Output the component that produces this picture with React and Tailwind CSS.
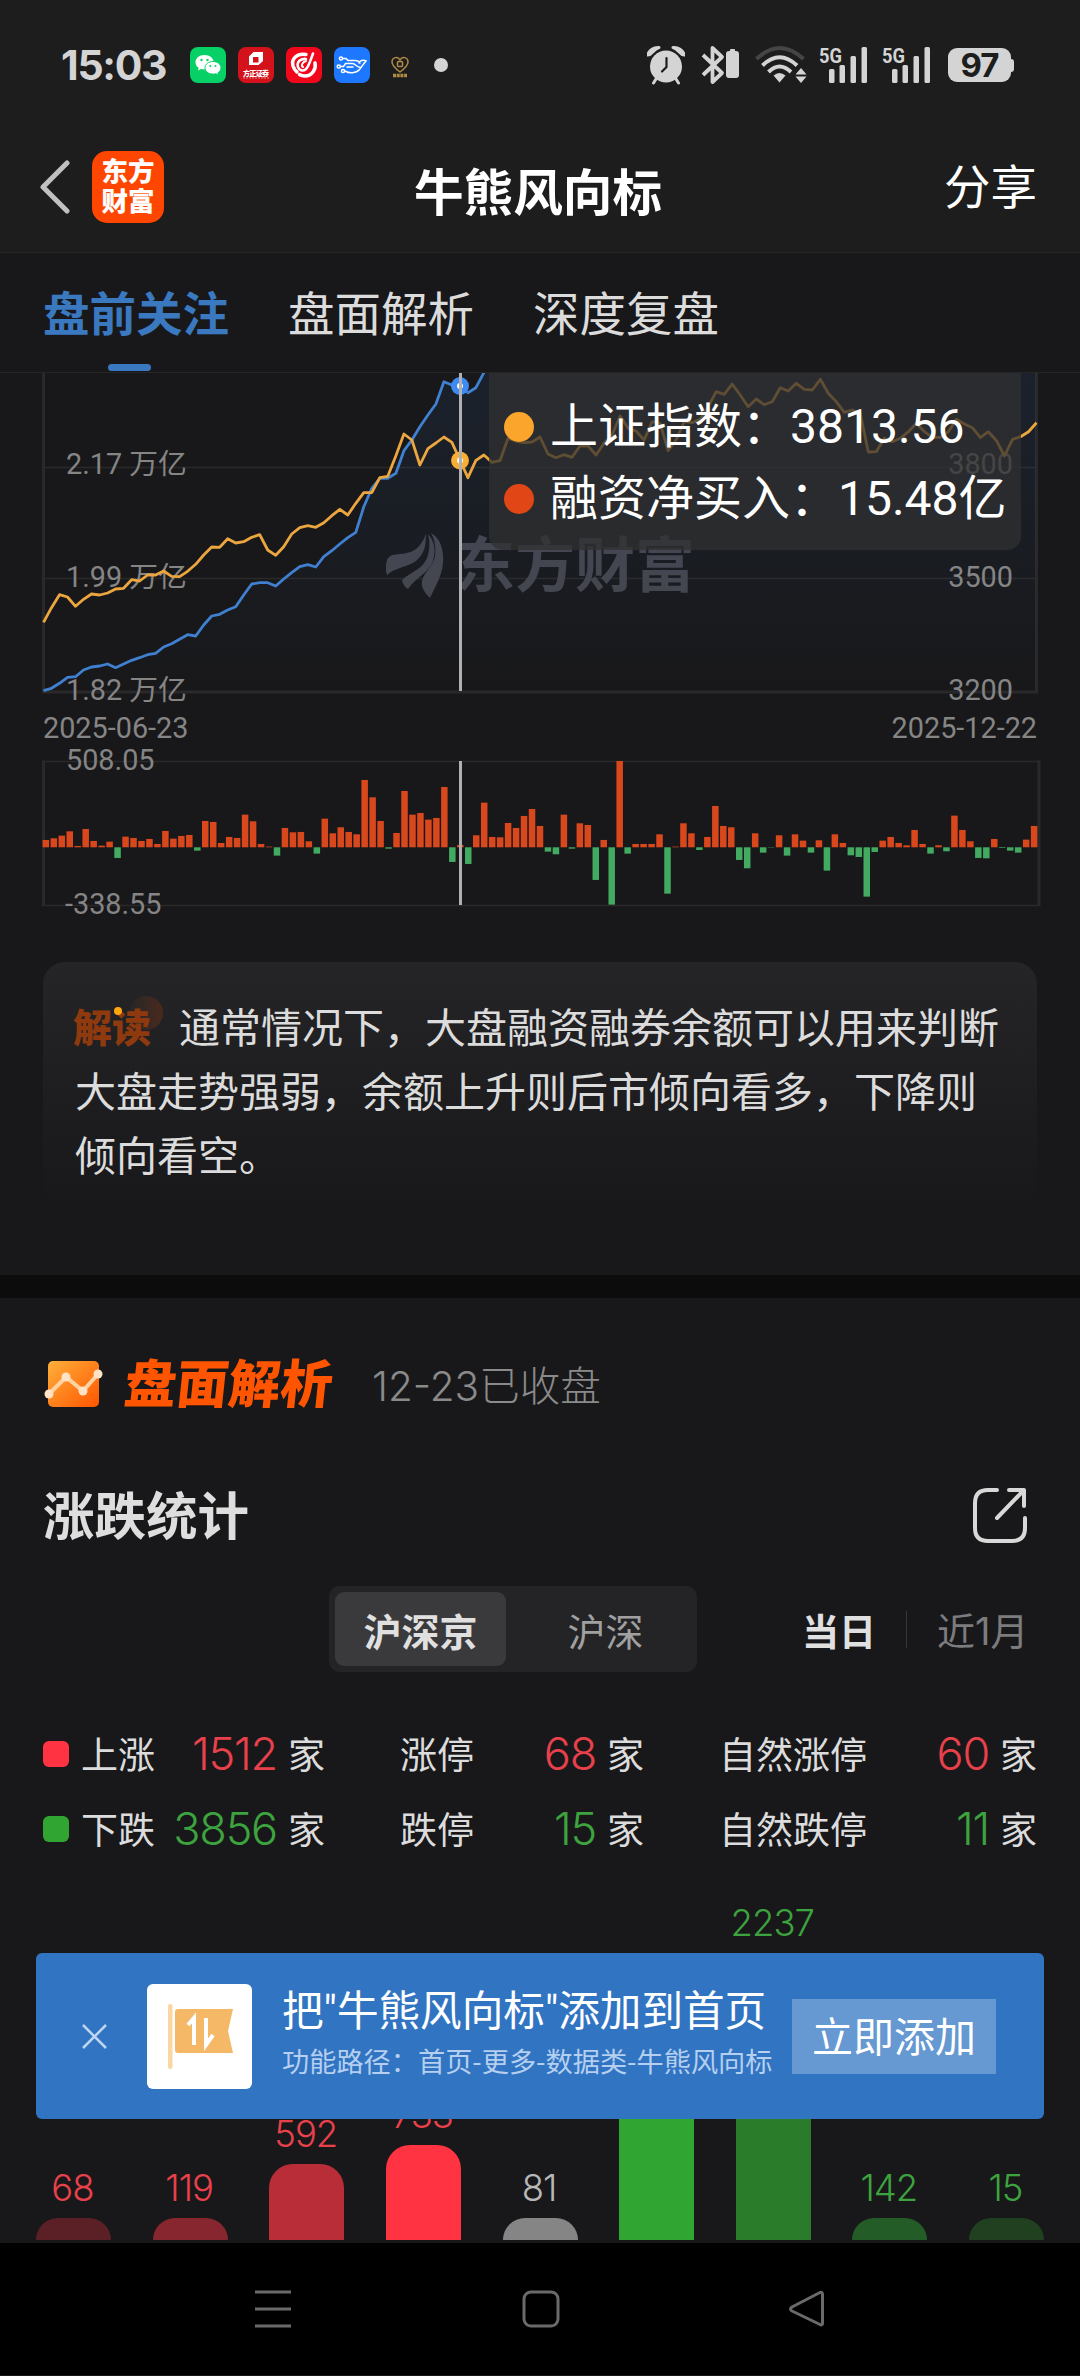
import React, { useState } from "react";

const indexLine = [
  787, 743, 704, 711, 739, 718, 702, 705, 699, 687, 685, 659, 663, 645, 645, 633, 649, 650, 634, 613,
  585, 561, 562, 536, 549, 545, 532, 524, 570, 586, 560, 522, 503, 497, 502, 488, 467, 448, 465, 430,
  398, 398, 353, 349, 287, 222, 240, 315, 266, 249, 231, 247, 300, 353, 301, 285, 307, 302, 235, 244,
  248, 246, 231, 282, 293, 284, 292, 258, 258, 285, 250, 225, 168, 205, 213, 240, 185, 190, 272, 240,
  185, 188, 178, 140, 95, 103, 72, 105, 140, 117, 134, 125, 83, 93, 70, 88, 90, 58, 100, 125,
  157, 150, 160, 276, 275, 235, 245, 235, 215, 190, 215, 232, 232, 215, 178, 192, 203, 233, 215, 242,
  288, 238, 230, 215, 188,
];

const balanceLine = [
  992, 985, 970, 952, 950, 930, 921, 918, 912, 923, 912, 901, 893, 884, 880, 861, 851, 838, 824, 828,
  795, 768, 763, 750, 740, 705, 672, 668, 668, 678, 657, 638, 620, 614, 621, 590, 572, 552, 533, 517,
  440, 385, 355, 355, 340, 272, 240, 200, 165, 132, 65, 75, 78, 98, 83, 38, -30,
];

const netBuy = [
  22, 27, 35, 48, 4, 55, 19, 5, 17, -32, 32, 28, 19, 25, 10, 49, 26, 34, 37, -10,
  79, 76, 13, 31, 28, 98, 78, 10, 2, -25, 58, 45, 46, 18, -19, 86, 42, 60, 46, 39,
  202, 150, 79, -4, 43, 169, 98, 103, 83, 88, 181, -44, 7, -50, 36, 134, 31, 30, 73, 58,
  94, 115, 64, -13, -21, 98, -4, 72, 67, -98, 22, -172, 259, -19, 10, 10, 10, 39, -139, 2,
  72, 42, -8, 31, 124, 64, 60, -38, -63, 42, -16, -1, 36, -25, 39, 20, -16, 21, -70, 39,
  13, -24, -29, -148, -14, 20, 31, 13, 6, 52, 10, -19, 6, -12, 95, 52, 18, -32, -33, 25,
  -2, -10, -16, 23, 64,
];

const toPoints = (values) =>
  values.map((v, i) => `${(43.5 + i * 8.008).toFixed(1)},${(v / 3 - 13).toFixed(1)}`).join(" ");

const stats = [
  { dot: "bg-[#ff3341]", color: "text-[#e8414b]", items: [["上涨", 1512], ["涨停", 68], ["自然涨停", 60]] },
  { dot: "bg-[#30a532]", color: "text-[#3da33f]", items: [["下跌", 3856], ["跌停", 15], ["自然跌停", 11]] },
];

const distribution = [
  { count: 68, height: 22, bar: "bg-[#5a2026]", text: "text-[#e8414b]" },
  { count: 119, height: 22, bar: "bg-[#88262f]", text: "text-[#e8414b]" },
  { count: 592, height: 76, bar: "bg-[#b82d38]", text: "text-[#e8414b]" },
  { count: 733, height: 95, bar: "bg-[#ff3341]", text: "text-[#e8414b]" },
  { count: 81, height: 22, bar: "bg-[#858585]", text: "text-[#b8b8b8]" },
  { count: 1462, height: 188, bar: "bg-[#30a532]", text: "text-[#3da33f]" },
  { count: 2237, height: 287, bar: "bg-[#2a7c2b]", text: "text-[#3da33f]" },
  { count: 142, height: 22, bar: "bg-[#235c26]", text: "text-[#3da33f]" },
  { count: 15, height: 22, bar: "bg-[#20401f]", text: "text-[#3da33f]" },
];

function SignalIcon() {
  return (
    <svg width="50" height="40" viewBox="0 0 50 40" fill="#d4d4d4">
      <text x="0" y="17.5" fontSize="21" fontWeight="700" fontFamily="Roboto, sans-serif" textLength="23" lengthAdjust="spacingAndGlyphs">5G</text>
      <rect x="10" y="24" width="5.5" height="14" rx="1.5" />
      <rect x="20.500" y="20" width="5.5" height="18" rx="1.5" />
      <rect x="31.500" y="11" width="5.5" height="27" rx="1.5" />
      <rect x="42.500" y="2" width="5.500" height="36" rx="1.5" />
    </svg>
  );
}

function StatusBar() {
  return (
    <div className="flex h-[130px] shrink-0 items-center pl-[61px] pr-[66px] text-[#d4d4d4]">
      <span className="w-[129px] whitespace-nowrap font-['Inter',sans-serif] text-[41px] font-bold leading-none tracking-[-1.3px]">15:03</span>
      <div className="flex items-center gap-3">
        <svg width="36" height="36" viewBox="0 0 36 36">
          <rect width="36" height="36" rx="8" fill="#07d166" />
          <path d="M14.500 8c-5.200 0-9 3.200-9 7.300 0 2.300 1.200 4.300 3.200 5.600l-.8 2.700 3.200-1.600c1 .3 2.200.4 3.400.4 5.200 0 9.200-3 9.200-7.100S19.700 8 14.500 8z" fill="#fff" />
          <path d="M23 14.500c-4.600 0-8 2.900-8 6.300s3.400 6.300 8 6.300c1 0 2-.2 2.900-.4l2.600 1.400-.6-2.300c1.900-1.200 3.100-2.900 3.100-5 0-3.400-3.400-6.300-8-6.300z" fill="#fff" stroke="#07d166" />
          <g fill="#07d166">
            <circle cx="11.500" cy="13" r="1.200" />
            <circle cx="17.500" cy="13" r="1.200" />
            <circle cx="20.300" cy="19" r="1" />
            <circle cx="25.500" cy="19" r="1" />
          </g>
        </svg>
        <svg width="36" height="36" viewBox="0 0 36 36">
          <rect width="36" height="36" rx="8" fill="#d3121c" />
          <path fillRule="evenodd" d="M15.500 5H25v9l-4.500 4H11V9.500zM15 10v5.500h5.500V10z" fill="#fff" />
          <text x="5" y="28.500" fontSize="7" fontWeight="900" fill="#fff" textLength="26" fontFamily="'Noto Sans CJK SC', sans-serif">方正证券</text>
          <path d="M5 31h26" stroke="#f0a0a0" strokeWidth="0.800" strokeDasharray="2 1" />
        </svg>
        <svg width="36" height="36" viewBox="0 0 36 36" fill="none" stroke="#fff" strokeLinecap="round">
          <rect width="36" height="36" rx="8" fill="#f0071b" stroke="none" />
          <path d="M20 7.500C11 6 5 12 7 19c1 3 2 4.500 4 6" strokeWidth="3.500" />
          <path d="M20 12c-6-1-9.500 3.500-8 8 1 3.500 5 4.500 7.500 2.500 3-2 4.500-8 7.500-16" strokeWidth="2.600" />
          <path d="M20 14c-4 1-5 5-3 6" strokeWidth="2" />
          <path d="M29 16c1.500 6-3 13-10 13-2.500 0-4-.5-5.500-1.500" strokeWidth="3.500" />
        </svg>
        <svg width="36" height="36" viewBox="0 0 36 36" fill="none" stroke="#fff" strokeWidth="1.500" strokeLinecap="round">
          <rect width="36" height="36" rx="8" fill="#1d78ff" stroke="none" />
          <circle cx="7" cy="11.500" r="1.600" />
          <circle cx="4.800" cy="19.500" r="1.600" />
          <circle cx="9" cy="24" r="1.600" />
          <path d="M9 11.500h3l2 2h7c3 0 4 .5 5 2.500M6.500 19.500h3l2-3h7c3 0 4 4 8 4M11 24c4 2.500 11 2.500 14.500-1.500 2-2 3-4.500 6.500-8.500-3-1.500-6-.5-7 2M13 20h6" />
        </svg>
        <svg width="36" height="36" viewBox="0 0 36 36" fill="none" stroke="#b08a45" strokeWidth="1.500">
          <path d="M18 25c-4-3-8-6-8-10 0-5 6-6 8-2 2-4 8-3 8 2 0 4-4 7-8 10z" />
          <rect x="15.500" y="14.500" width="5" height="5" rx="1" />
          <path d="M11 28.500h14" strokeWidth="3.500" strokeDasharray="3 0.700" strokeLinecap="butt" />
        </svg>
        <span className="ml-1 h-3.5 w-3.5 rounded-full bg-[#d4d4d4]" />
      </div>
      <div className="ml-auto flex items-center">
        <svg width="38" height="40" viewBox="0 0 38 40" className="mr-4">
          <circle cx="19" cy="21.500" r="16" fill="#d4d4d4" />
          <path d="M0.500 11A11 11 0 0 1 12 3.500L8 5.800L3 10.500zM37.500 11A11 11 0 0 0 26 3.500L30 5.800L35 10.500z" fill="#d4d4d4" stroke="#d4d4d4" strokeWidth="3" strokeLinejoin="round" transform="translate(0 -1)" />
          <path d="M9 34l-2.500 4M29 34l2.500 4" stroke="#d4d4d4" strokeWidth="3" strokeLinecap="round" />
          <path d="M19.500 13v9l-4.500 4.500" stroke="#1d1d1d" strokeWidth="2.200" fill="none" strokeLinecap="round" />
        </svg>
        <svg width="38" height="40" viewBox="0 0 38 40" className="mr-4">
          <path d="M2 10l19 18-9.500 9V3l9.500 9L2 30" stroke="#d4d4d4" strokeWidth="3.800" fill="none" strokeLinejoin="round" />
          <rect x="25" y="6" width="13" height="27" rx="3" fill="#d4d4d4" />
          <rect x="29" y="4" width="5" height="4" rx="1" fill="#d4d4d4" />
        </svg>
        <svg width="52" height="40" viewBox="0 0 52 40" fill="none" strokeWidth="4" className="mr-3">
          <path d="M1.500 14Q24.500-8 48.500 14" stroke="#454545" />
          <path d="M7.500 20.500Q24.500 4 42 20.500" stroke="#d4d4d4" />
          <path d="M13.500 27Q24.500 16 36 27" stroke="#d4d4d4" />
          <path d="M24.500 37.500l-6-7q6-5 12 0z" fill="#d4d4d4" />
          <path d="M46 23l5.500 6.500h-11zM46 38l5.500-6.500h-11z" fill="#d4d4d4" />
        </svg>
        <div className="mr-[16px] flex gap-[13px]">
          <SignalIcon />
          <SignalIcon />
        </div>
        <div className="flex items-center">
          <span className="flex h-[34px] w-[63px] items-center justify-center rounded-[9px] bg-[#d4d4d4] font-['Inter',sans-serif] text-[33px] font-bold leading-none tracking-[-1px] text-[#1d1d1d]">97</span>
          <span className="h-[13px] w-[3px] rounded-r bg-[#d4d4d4]" />
        </div>
      </div>
    </div>
  );
}

function TitleBar() {
  return (
    <header className="flex h-[123px] shrink-0 items-center justify-between border-b border-[#252526] pl-[39px] pr-[43px]">
      <div className="flex w-[200px] items-center gap-[22px]">
        <svg width="31" height="54" viewBox="0 0 31 54" fill="none" className="mt-[-8px]">
          <path d="M28 3L4 27l24 24" stroke="#c0c0c0" strokeWidth="5" strokeLinejoin="round" strokeLinecap="round" />
        </svg>
        <div className="mt-[-9px] flex h-[72px] w-[72px] flex-col items-center justify-center rounded-[15px] bg-[#ff4600] pb-[3px] text-[26.5px] font-black leading-[30px] text-white">
          <span>东方</span>
          <span>财富</span>
        </div>
      </div>
      <h1 className="mt-[-3px] text-[49.6px] font-bold leading-none text-white">牛熊风向标</h1>
      <button className="mt-[-13px] w-[200px] text-right text-[46.5px] leading-none text-white">分享</button>
    </header>
  );
}

function Tabs() {
  const [active, setActive] = useState("盘前关注");
  return (
    <nav className="flex h-[120px] shrink-0 gap-[59px] border-b border-[#252526] pl-[43px]">
      {["盘前关注", "盘面解析", "深度复盘"].map((tab) => (
        <button key={tab} onClick={() => setActive(tab)} className="flex flex-col items-center justify-between pt-[35px]">
          <span
            className={
              active === tab
                ? "text-[46.5px] font-bold leading-none text-[#3a78c0]"
                : "text-[46.5px] leading-none text-[#dcdcdc]"
            }
          >
            {tab}
          </span>
          {active === tab && <span className="mb-px mr-[13px] h-[7px] w-[43px] rounded-full bg-[#3a78c0]" />}
        </button>
      ))}
    </nav>
  );
}

function Chart() {
  const balance = toPoints(balanceLine);
  return (
    <div className="relative h-[547px] shrink-0 overflow-hidden">
      <svg width="1080" height="547" viewBox="0 0 1080 547" className="block" fontFamily="Roboto, 'Noto Sans CJK SC', sans-serif">
        <defs>
          <linearGradient id="area" x1="0" y1="0" x2="0" y2="1">
            <stop offset="0" stopColor="#3d8af0" stopOpacity="0.1" />
            <stop offset="1" stopColor="#3d8af0" stopOpacity="0" />
          </linearGradient>
        </defs>
        <g stroke="#29292b">
          <path d="M43 94.500H1036M43 205.500H1036" strokeWidth="1.500" />
          <path d="M43.500 0V319H1036.500V0" strokeWidth="3" fill="none" />
          <path d="M43 388.500H1039M43 532.500H1039" strokeWidth="1.500" />
          <path d="M43.500 387.500V533M1039 387.500V533" strokeWidth="3" />
        </g>
        {/* brand watermark */}
        <g fill="#44444b">
          <path d="M386 198c0-14 2-16 14-17 13-1 20-5 26-20 0 13-2 20-10 27-8 6-20 6-29 14z" />
          <path d="M402 207c8-8 20-10 25-22 3-8 3-16 1-24 7 8 8 17 5 27-4 12-17 16-25 28-4-3-5-5-6-9z" />
          <path d="M431 160c9 5 13 16 12 30-1 13-8 24-13 35-6-6-9-11-8-17 2-9 11-14 13-25 1-8 0-16-4-23z" />
          <text x="455" y="214" fontSize="60" fontWeight="700">东方财富</text>
        </g>
        <polygon points={`${balance} 492,-60 1036,-60 1036,318 43.500,318`} fill="url(#area)" />
        <g fill="#858585" fontSize="28.800">
          <text x="66" y="101">2.17 万亿</text>
          <text x="66" y="214">1.99 万亿</text>
          <text x="66" y="327">1.82 万亿</text>
          <text x="1013" y="101" textAnchor="end">3800</text>
          <text x="1013" y="214" textAnchor="end">3500</text>
          <text x="1013" y="327" textAnchor="end">3200</text>
          <text x="43" y="365">2025-06-23</text>
          <text x="1037" y="365" textAnchor="end">2025-12-22</text>
          <text x="66" y="397">508.05</text>
          <text x="65" y="541">-338.55</text>
        </g>
        <g fill="none" strokeWidth="2.800" strokeLinejoin="round">
          <polyline points={balance} stroke="#4080d0" />
          <polyline points={toPoints(indexLine)} stroke="#eca63f" />
        </g>
        {netBuy.map((v, i) => (
          <rect
            key={i}
            x={42.600 + i * 7.970}
            y={v > 0 ? 474.300 - v / 3 : 474.300}
            width="6.500"
            height={Math.abs(v) / 3}
            fill={v > 0 ? "#d9481c" : "#43aa62"}
          />
        ))}
        <circle cx="460" cy="13" r="9" fill="#3d8af0" />
        <circle cx="460" cy="87.500" r="9" fill="#f9ae34" />
        <circle cx="460" cy="13" r="3" fill="#fff" />
        <circle cx="460" cy="87.500" r="3" fill="#fff" />
        <path d="M460.500 0V318M460.500 388V532" stroke="#b0b0b2" strokeWidth="3" />
      </svg>
      <div className="absolute left-[489px] top-[-90px] flex h-[267px] w-[532px] flex-col rounded-[14px] bg-[#303031]/75 pl-[15px] pt-[36px] font-['Roboto','Noto_Sans_CJK_SC',sans-serif] text-[48px] text-white">
        {[
          ["bg-[#3d8af0]", "融资余额：2.30万亿", "h-[72px] pb-[12px] mt-[-4px] mb-[4px]"],
          ["bg-[#fba52c]", "上证指数：3813.56", "h-[72px]"],
          ["bg-[#e14616]", "融资净买入：15.48亿", "h-[72px]"],
        ].map(([dot, label, box]) => (
          <div key={label} className={`flex items-center gap-[16px] whitespace-nowrap leading-none ${box}`}>
            <span className={`h-[30px] w-[30px] rounded-full ${dot}`} />
            <span>{label}</span>
          </div>
        ))}
      </div>
    </div>
  );
}

function Insight() {
  return (
    <div className="mx-[43px] mt-[42px] h-[245px] shrink-0 rounded-[22px] bg-linear-to-b from-[#252527] to-[#18181a] pl-[32px] pt-[31px] text-[41px] leading-[64px] text-[#dcdcdc]">
      <div className="flex whitespace-nowrap">
        <span className="relative ml-[-2px] w-[106px] text-[39px] font-black text-[#8f3a0e]">
          <span className="absolute left-[56px] top-[3px] h-[34px] w-[34px] rounded-full bg-linear-to-r from-[#252527] to-[#4a2a1c]" />
          <span className="relative">解读</span>
          <span className="absolute left-[41px] top-[14px] h-2 w-2 rounded-full bg-[#ffa510]" />
        </span>
        <span>通常情况下，大盘融资融券余额可以用来判断</span>
      </div>
      <p className="whitespace-nowrap">大盘走势强弱，余额上升则后市倾向看多，下降则</p>
      <p>倾向看空。</p>
    </div>
  );
}

function SectionHead() {
  return (
    <div className="flex h-[172px] shrink-0 items-center pl-[44px]">
      <svg width="60" height="48" viewBox="0 0 60 48">
        <defs>
          <linearGradient id="badge" x1="0" y1="0" x2="1" y2="1">
            <stop offset="0" stopColor="#ffb03a" />
            <stop offset="1" stopColor="#ff5500" />
          </linearGradient>
        </defs>
        <rect x="4" y="1" width="51" height="46" rx="5" fill="url(#badge)" />
        <path d="M5 34L22 17l17 14 15-17" stroke="#ffd2a0" strokeWidth="4" fill="none" />
        <g fill="#ffe3c4">
          <circle cx="5" cy="34" r="4.500" />
          <circle cx="22" cy="17" r="4.500" />
          <circle cx="39" cy="31" r="4.500" />
          <circle cx="54" cy="14" r="4.500" />
        </g>
      </svg>
      <h2 className="ml-[21px] mt-[-7px] w-[247px] -skew-x-6 whitespace-nowrap text-[52px] font-black leading-none text-[#ff5500]">盘面解析</h2>
      <span className="mt-[6px] font-['Inter','Noto_Sans_CJK_SC',sans-serif] text-[40.5px] font-light leading-none text-[#8a8a8a]">12-23已收盘</span>
    </div>
  );
}

function StatRow({ row }) {
  const widths = ["w-[282px]", "w-[244px]", "w-[318px]"];
  return (
    <div className="flex h-[75px] items-center justify-between whitespace-nowrap text-[37px] leading-none text-[#dcdcdc]">
      {row.items.map(([label, value], i) => (
        <div key={label} className={`flex items-center ${widths[i]}`}>
          {i === 0 && <span className={`mr-[12px] h-[26px] w-[26px] rounded-[6px] ${row.dot}`} />}
          <span>{label}</span>
          <span className={`ml-auto mr-[11px] font-['Inter',sans-serif] text-[45px] font-light tracking-[-1.2px] ${row.color}`}>{value}</span>
          <span>家</span>
        </div>
      ))}
    </div>
  );
}

function Statistics() {
  const [market, setMarket] = useState("沪深京");
  return (
    <section className="relative shrink-0">
      <div className="flex h-[92px] items-center justify-between pl-[43px] pr-[52px]">
        <h3 className="mt-[-6px] text-[51.5px] font-bold leading-none text-[#dedede]">涨跌统计</h3>
        <svg width="56" height="58" viewBox="0 0 56 58" fill="none" stroke="#d8d8d8" strokeWidth="4" strokeLinecap="round" strokeLinejoin="round">
          <path d="M25 3H16Q3 3 3 16V41Q3 54 16 54H40Q53 54 53 41V31" />
          <path d="M37 3H52V19M51 4L25 31" />
        </svg>
      </div>
      <div className="ml-[329px] mt-[24px] flex h-[86px] items-center text-[38px] leading-none">
        <div className="flex h-full w-[368px] rounded-[11px] bg-[#242426] p-[6px]">
          {["沪深京", "沪深"].map((name) => (
            <button
              key={name}
              onClick={() => setMarket(name)}
              className={
                market === name
                  ? "w-[171px] rounded-[9px] bg-[#3a3a3c] pt-[2px] font-bold text-[#e0e0e0]"
                  : "flex-1 pl-[14px] pt-[2px] text-[#a0a0a0]"
              }
            >
              {name}
            </button>
          ))}
        </div>
        <span className="ml-[105px] mt-[2px] text-[37px] font-bold text-[#e0e0e0]">当日</span>
        <span className="mx-[30px] h-[37px] w-px bg-[#353537]" />
        <span className="mt-[4px] whitespace-nowrap font-['Inter','Noto_Sans_CJK_SC',sans-serif] text-[38px] text-[#7c7c7e]">近1月</span>
      </div>
      <div className="mx-[43px] mt-[44px]">
        {stats.map((row) => (
          <StatRow key={row.dot} row={row} />
        ))}
      </div>
      <div className="mx-[36px] flex h-[374px] items-end justify-between">
        {distribution.map((d) => (
          <div key={d.count} className="flex w-[75px] flex-col items-center">
            <span className={`mb-[12px] mr-[2px] font-['Inter',sans-serif] text-[36.5px] font-light leading-none tracking-[-1px] ${d.text}`}>{d.count}</span>
            <div className={`w-full rounded-t-[24px] ${d.bar}`} style={{ height: d.height }} />
          </div>
        ))}
      </div>
    </section>
  );
}

function AddBanner() {
  return (
    <div className="absolute left-[36px] top-[1953px] flex h-[166px] w-[1008px] items-center whitespace-nowrap rounded-[6px] bg-[#3174c2] pl-[45px]">
      <svg width="27" height="27" viewBox="0 0 27 27" stroke="#bdd5f0" strokeWidth="2.500">
        <path d="M2 2l23 23M25 2L2 25" />
      </svg>
      <div className="ml-[39px] flex h-[105px] w-[105px] items-center justify-center rounded-[6px] bg-white">
        <svg width="70" height="68" viewBox="0 0 70 68">
          <rect x="3" y="2" width="4.500" height="65" rx="2" fill="#fad7a2" />
          <path d="M13 7H68l-5 22 5 22H13q-3 0-3-3V10q0-3 3-3z" fill="#f4b866" />
          <path d="M23 23l6-7v27M41 16v27l7-10" stroke="#fff" strokeWidth="4" fill="none" />
        </svg>
      </div>
      <div className="ml-[30px] mt-[-6px] w-[510px]">
        <p className="font-['Roboto','Noto_Sans_CJK_SC',sans-serif] text-[41.600px] leading-[50px] text-white">把"牛熊风向标"添加到首页</p>
        <p className="mt-[3px] text-[27.200px] leading-[40px] text-[#b5cff0]">功能路径：首页-更多-数据类-牛熊风向标</p>
      </div>
      <button className="h-[75px] w-[204px] bg-[#6698d1] pb-[4px] text-[41px] leading-none text-white">立即添加</button>
    </div>
  );
}

function SystemNav() {
  return (
    <footer className="mt-[3px] flex h-[132px] shrink-0 items-center bg-black pl-[254px]">
      <svg width="38" height="38" viewBox="0 0 38 38" stroke="#6a6a6a" strokeWidth="3">
        <path d="M1 2H37M1 19H37M1 36H37" />
      </svg>
      <svg width="38" height="38" viewBox="0 0 38 38" className="ml-[230px]" fill="none" stroke="#6a6a6a" strokeWidth="3">
        <rect x="2" y="2" width="34" height="34" rx="7" />
      </svg>
      <svg width="38" height="38" viewBox="0 0 38 38" className="ml-[228px]" fill="none" stroke="#6a6a6a" strokeWidth="3" strokeLinejoin="round">
        <path d="M34.500 4V34Q34 36 31 34L4 21Q1 19 4 17L31 3Q34 1 34.500 4z" />
      </svg>
    </footer>
  );
}

export default function App() {
  return (
    <div className="relative flex h-[2376px] w-[1080px] flex-col overflow-hidden bg-[#18181a] font-['Noto_Sans_CJK_SC',sans-serif]">
      <div className="shrink-0 bg-[#1d1d1d]">
        <StatusBar />
        <TitleBar />
      </div>
      <Tabs />
      <Chart />
      <Insight />
      <div className="mt-[68px] h-[23px] shrink-0 bg-[#0c0c0c]" />
      <SectionHead />
      <Statistics />
      <SystemNav />
      <AddBanner />
    </div>
  );
}
